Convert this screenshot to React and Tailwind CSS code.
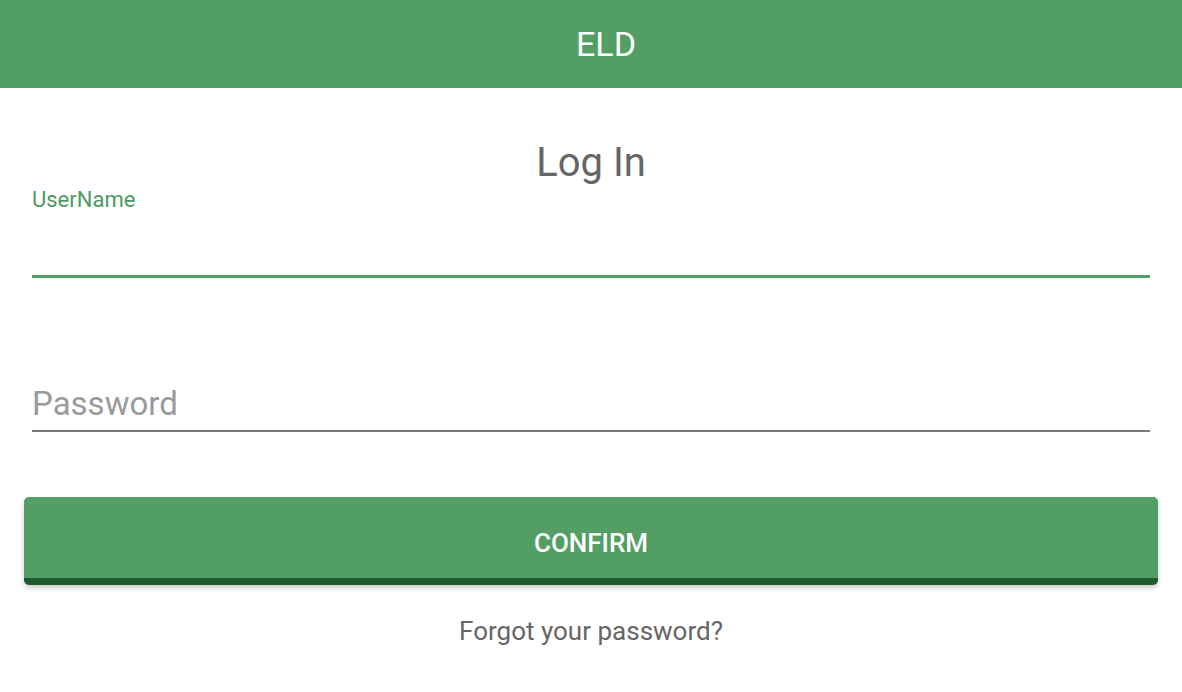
import React from 'react';

export default function App() {
    const [username, setUsername] = React.useState('');
    const [password, setPassword] = React.useState('');

    return (
        <div className="min-h-screen bg-white" style={{ fontFamily: 'Roboto, "Noto Sans", sans-serif' }}>
            <header className="flex h-[88px] items-center justify-center bg-[#539e65] pl-[30px]">
                <h1 className="text-[34px] leading-none text-white">ELD</h1>
            </header>

            <div className="px-8">
                <h2 className="mt-[51px] text-center text-[40px] leading-[48px] text-[#666666]">Log In</h2>

                <label className="mt-[1px] block text-[22px] leading-[24px] text-[#4e9a62]">UserName</label>
                <input
                    type="text"
                    aria-label="UserName"
                    className="block h-[66px] w-full border-b-[3px] border-[#539e65] bg-transparent text-[30px] text-[#333] outline-none"
                    value={username}
                    onChange={e => setUsername(e.target.value)}
                />

                <input
                    type="password"
                    placeholder="Password"
                    aria-label="Password"
                    className="mt-[105px] block h-[49px] w-full border-b-2 border-[#777777] bg-transparent pb-[7px] text-[33px] leading-[40px] text-[#333] placeholder:text-[#9a9a9a] outline-none"
                    value={password}
                    onChange={e => setPassword(e.target.value)}
                />
            </div>

            <div className="px-6">
                <button
                    type="button"
                    className="mt-[65px] flex h-[88px] w-full items-center justify-center rounded-[5px] border-b-[7px] border-[#1d5b2f] bg-[#539e65] pt-[12px] text-[26px] font-medium text-white shadow-[0_3px_5px_rgba(0,0,0,0.2)]"
                >
                    CONFIRM
                </button>
            </div>

            <p className="mt-[32px] text-center text-[26px] leading-[28px] text-[#666666]">Forgot your password?</p>
        </div>
    );
}
